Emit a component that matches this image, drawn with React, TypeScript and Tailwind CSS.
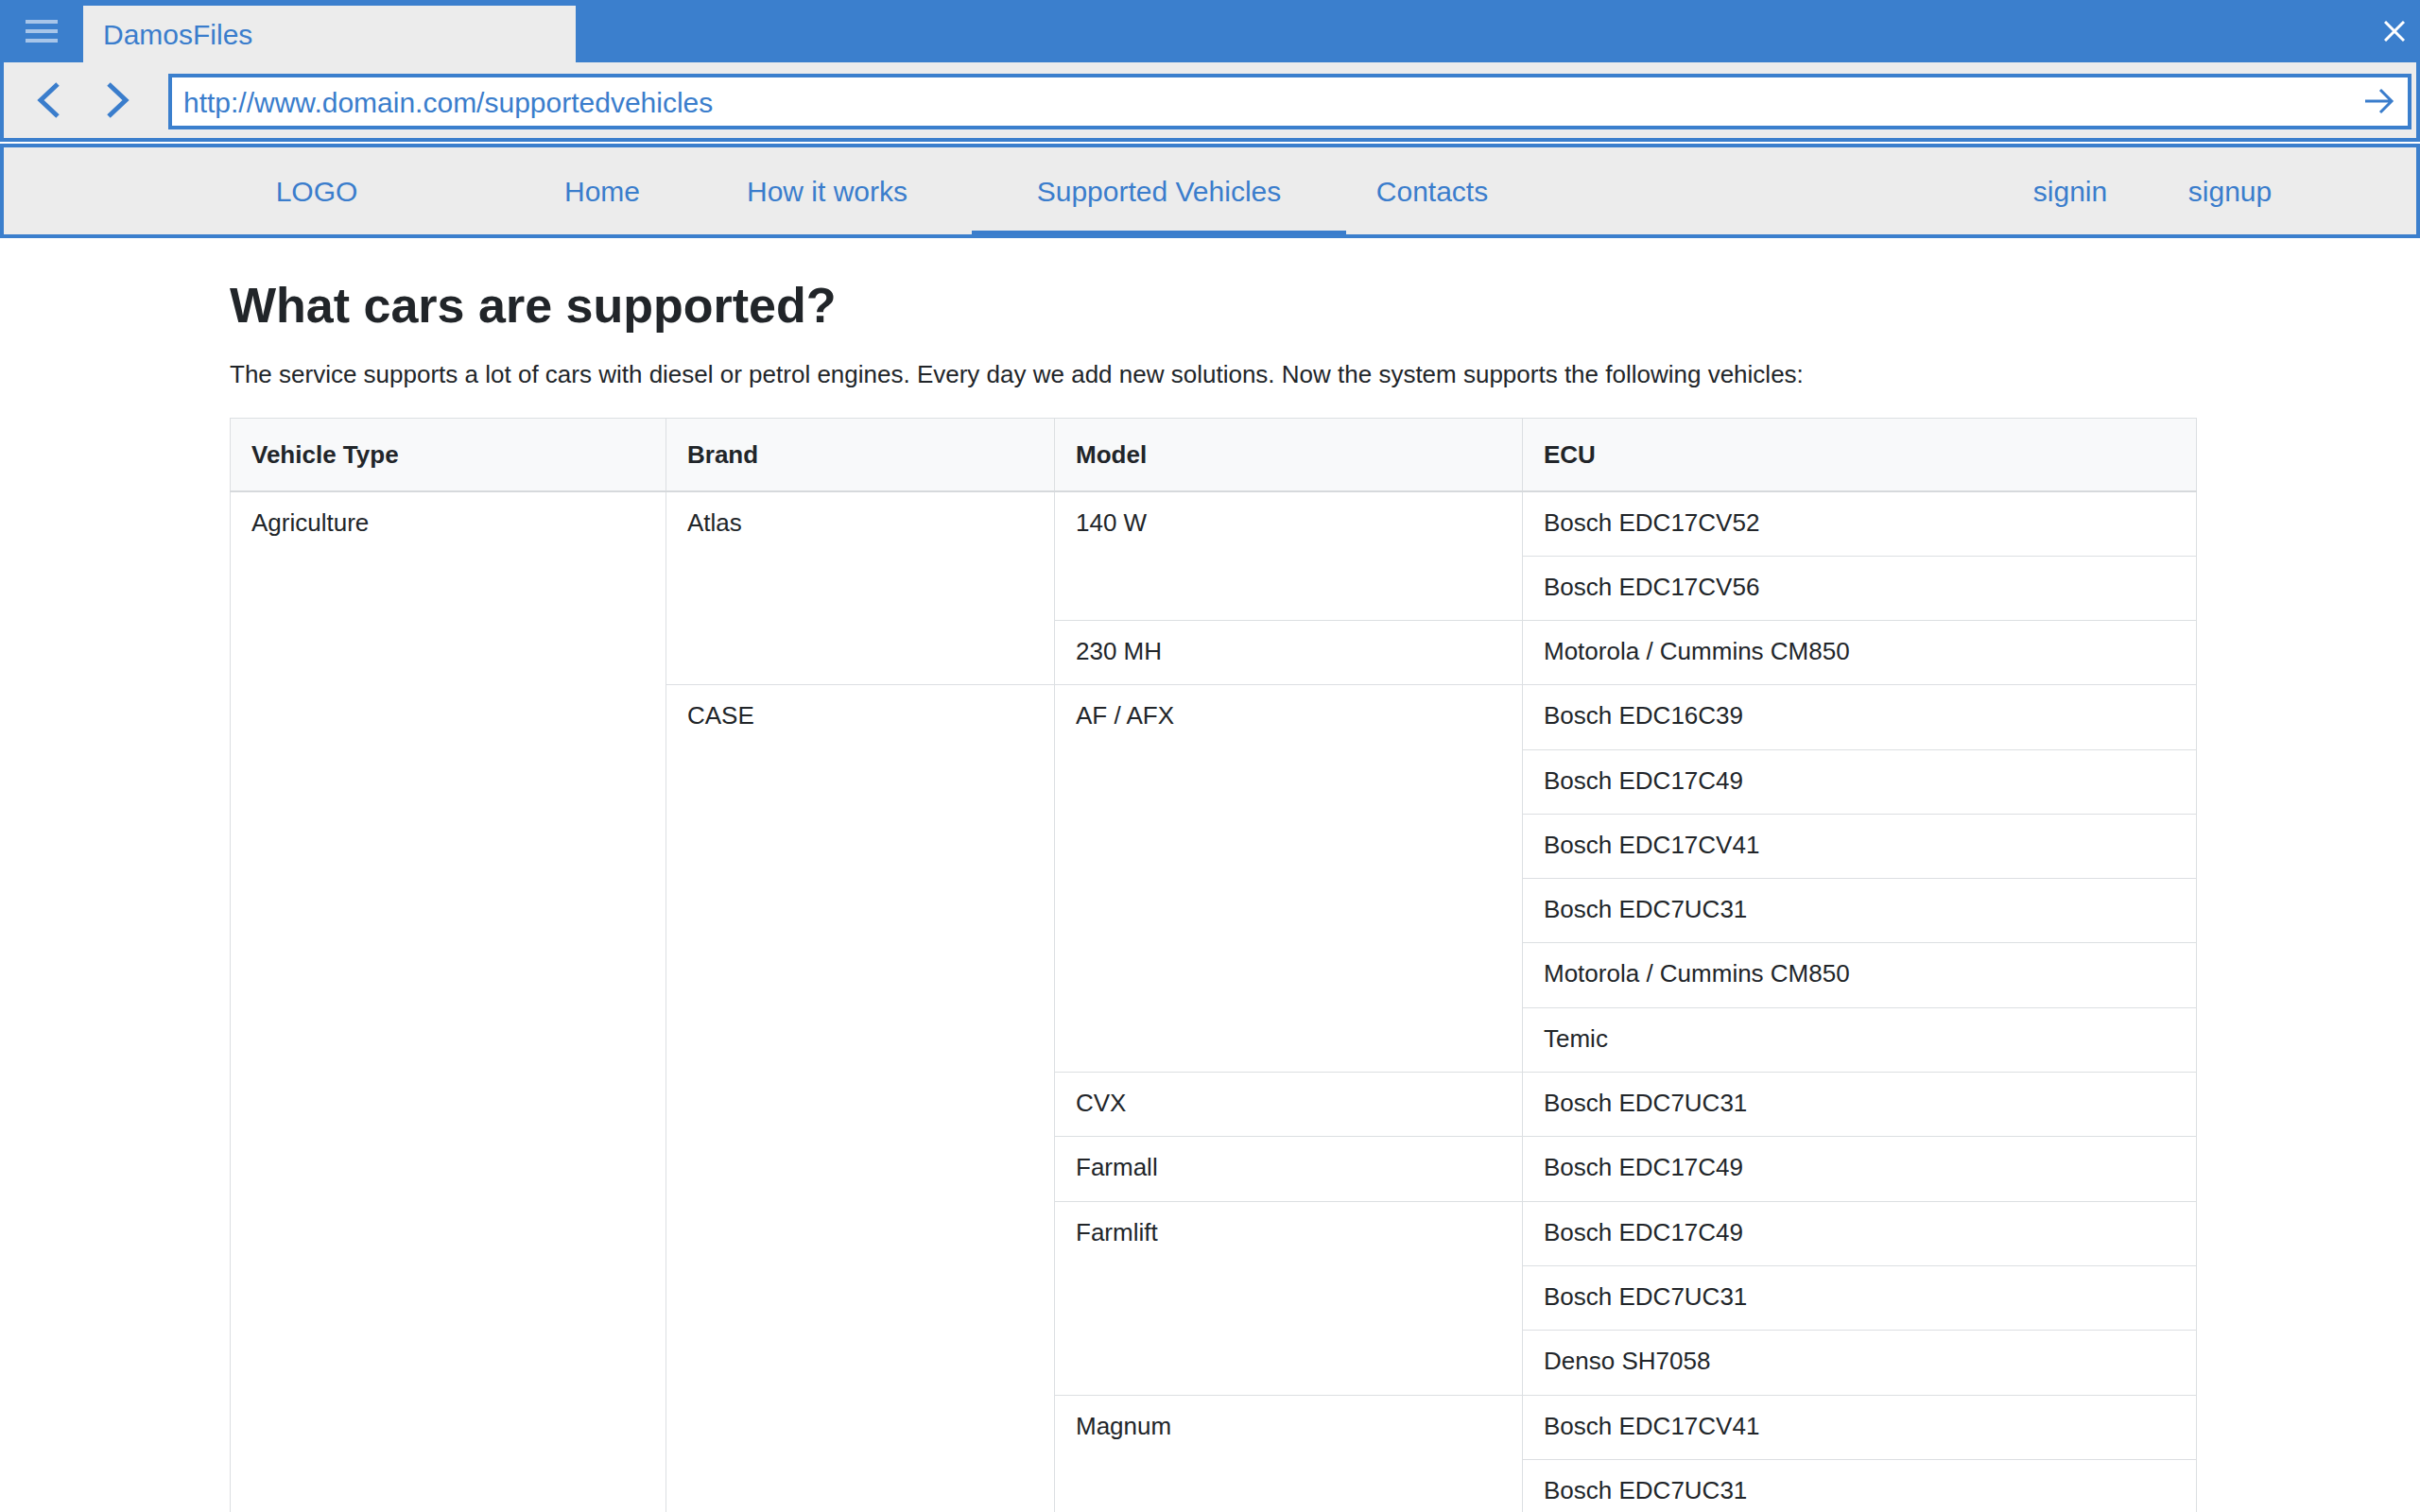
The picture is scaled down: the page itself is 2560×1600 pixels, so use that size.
import React from "react";

type Model = { name: string; ecus: string[] };
type Brand = { name: string; models: Model[] };
type VehicleType = { name: string; brands: Brand[] };

const data: VehicleType[] = [
  {
    name: "Agriculture",
    brands: [
      {
        name: "Atlas",
        models: [
          { name: "140 W", ecus: ["Bosch EDC17CV52", "Bosch EDC17CV56"] },
          { name: "230 MH", ecus: ["Motorola / Cummins CM850"] },
        ],
      },
      {
        name: "CASE",
        models: [
          {
            name: "AF / AFX",
            ecus: [
              "Bosch EDC16C39",
              "Bosch EDC17C49",
              "Bosch EDC17CV41",
              "Bosch EDC7UC31",
              "Motorola / Cummins CM850",
              "Temic",
            ],
          },
          { name: "CVX", ecus: ["Bosch EDC7UC31"] },
          { name: "Farmall", ecus: ["Bosch EDC17C49"] },
          {
            name: "Farmlift",
            ecus: ["Bosch EDC17C49", "Bosch EDC7UC31", "Denso SH7058"],
          },
          {
            name: "Magnum",
            ecus: ["Bosch EDC17CV41", "Bosch EDC7UC31", "Denso SH7058"],
          },
          { name: "Maxxum", ecus: ["Bosch EDC17C49", "Bosch EDC7UC31"] },
        ],
      },
    ],
  },
];

const cell = "border border-[#dcdfe2] align-top px-[22px] pt-[13px] pb-0";

const NavLink = ({
  label,
  w,
  ml,
  active,
}: {
  label: string;
  w: string;
  ml: string;
  active?: boolean;
}) => (
  <a
    href="#"
    className={`${w} ${ml} relative flex h-full items-center justify-center text-[30px] text-[#3a7dcc]`}
  >
    {label}
    {active && <span className="absolute bottom-0 left-0 right-0 h-[4px] bg-[#3a7dcc]" />}
  </a>
);

function VehiclesTable() {
  const rows: React.ReactNode[] = [];
  data.forEach((vt) => {
    const vtSpan = vt.brands.reduce(
      (s, b) => s + b.models.reduce((m, x) => m + x.ecus.length, 0),
      0
    );
    vt.brands.forEach((b, bi) => {
      const bSpan = b.models.reduce((m, x) => m + x.ecus.length, 0);
      b.models.forEach((m, mi) => {
        m.ecus.forEach((ecu, ei) => {
          rows.push(
            <tr key={`${vt.name}-${b.name}-${m.name}-${ei}`} className="h-[68.3px]">
              {bi === 0 && mi === 0 && ei === 0 && (
                <td rowSpan={vtSpan} className={cell}>
                  {vt.name}
                </td>
              )}
              {mi === 0 && ei === 0 && (
                <td rowSpan={bSpan} className={cell}>
                  {b.name}
                </td>
              )}
              {ei === 0 && (
                <td rowSpan={m.ecus.length} className={cell}>
                  {m.name}
                </td>
              )}
              <td className={cell}>{ecu}</td>
            </tr>
          );
        });
      });
    });
  });

  return (
    <table className="mt-[26px] w-[2080px] table-fixed border-collapse text-[26px] leading-[1.5] text-[#212529]">
      <colgroup>
        <col className="w-[461px]" />
        <col className="w-[411px]" />
        <col className="w-[495px]" />
        <col className="w-[713px]" />
      </colgroup>
      <thead>
        <tr className="h-[77px] bg-[#f8f9fa]">
          {["Vehicle Type", "Brand", "Model", "ECU"].map((h) => (
            <th
              key={h}
              className="border border-b-2 border-[#dcdfe2] border-b-[#d6d9dc] px-[22px] text-left align-middle font-bold"
            >
              {h}
            </th>
          ))}
        </tr>
      </thead>
      <tbody>{rows}</tbody>
    </table>
  );
}

export default function App() {
  return (
    <div className="min-h-screen bg-white font-['Liberation_Sans',Arial,sans-serif]">
      {/* window title bar */}
      <div className="flex h-[66px] items-end bg-[#3b7fcd]">
        <div className="flex h-full w-[88px] flex-col justify-center gap-[6px] pl-[27px]">
          <span className="block h-[4px] w-[34px] bg-white/55" />
          <span className="block h-[4px] w-[34px] bg-white/55" />
          <span className="block h-[4px] w-[34px] bg-white/55" />
        </div>
        <div className="flex h-[60px] w-[521px] items-center bg-[#ececec] pl-[21px] text-[30px] text-[#3a7dcc]">
          DamosFiles
        </div>
        <div className="flex h-full flex-1 items-center justify-end pr-[16px]">
          <svg width="22" height="22" viewBox="0 0 22 22">
            <path d="M1 1 L21 21 M21 1 L1 21" stroke="white" strokeWidth="3" />
          </svg>
        </div>
      </div>

      {/* address bar */}
      <div className="flex h-[84px] items-center border-x-[4px] border-b-[4px] border-[#3b7fcd] bg-[#ececec]">
        <button className="ml-[33px] flex h-[40px] w-[28px] items-center justify-center">
          <svg width="26" height="38" viewBox="0 0 26 38">
            <polyline points="23,2 5,19 23,36" fill="none" stroke="#3a7dcc" strokeWidth="5" />
          </svg>
        </button>
        <button className="ml-[46px] flex h-[40px] w-[28px] items-center justify-center">
          <svg width="26" height="38" viewBox="0 0 26 38">
            <polyline points="3,2 21,19 3,36" fill="none" stroke="#3a7dcc" strokeWidth="5" />
          </svg>
        </button>
        <div className="ml-[39px] mr-[5px] mt-[2px] flex h-[59px] flex-1 items-center border-[4px] border-[#3b7fcd] bg-white pl-[12px] pr-[14px]">
          <span className="flex-1 pt-[3px] text-[30px] text-[#3a7dcc]">
            http://www.domain.com/supportedvehicles
          </span>
          <svg width="32" height="30" viewBox="0 0 32 30">
            <path d="M1 15 H29 M17 3 L29 15 L17 27" fill="none" stroke="#3a7dcc" strokeWidth="3" />
          </svg>
        </div>
      </div>

      {/* site nav */}
      <nav className="mt-[2px] flex h-[100px] border-[4px] border-[#3b7fcd] bg-[#ececec]">
        <NavLink label="LOGO" w="w-[200px]" ml="ml-[231px]" />
        <NavLink label="Home" w="w-[160px]" ml="ml-[122px]" />
        <NavLink label="How it works" w="w-[250px]" ml="ml-[33px]" />
        <NavLink label="Supported Vehicles" w="w-[396px]" ml="ml-[28px]" active />
        <NavLink label="Contacts" w="w-[180px]" ml="ml-[1px]" />
        <NavLink label="signin" w="w-[140px]" ml="ml-[515px]" />
        <NavLink label="signup" w="w-[140px]" ml="ml-[29px]" />
      </nav>

      {/* content */}
      <main className="pl-[243px] pb-[80px] text-[#212529]">
        <h1 className="mt-[40px] text-[52px] font-bold leading-[1.2]">
          What cars are supported?
        </h1>
        <p className="mt-[23px] text-[26px] leading-[1.5]">
          The service supports a lot of cars with diesel or petrol engines. Every day we add new
          solutions. Now the system supports the following vehicles:
        </p>
        <VehiclesTable />
      </main>
    </div>
  );
}
